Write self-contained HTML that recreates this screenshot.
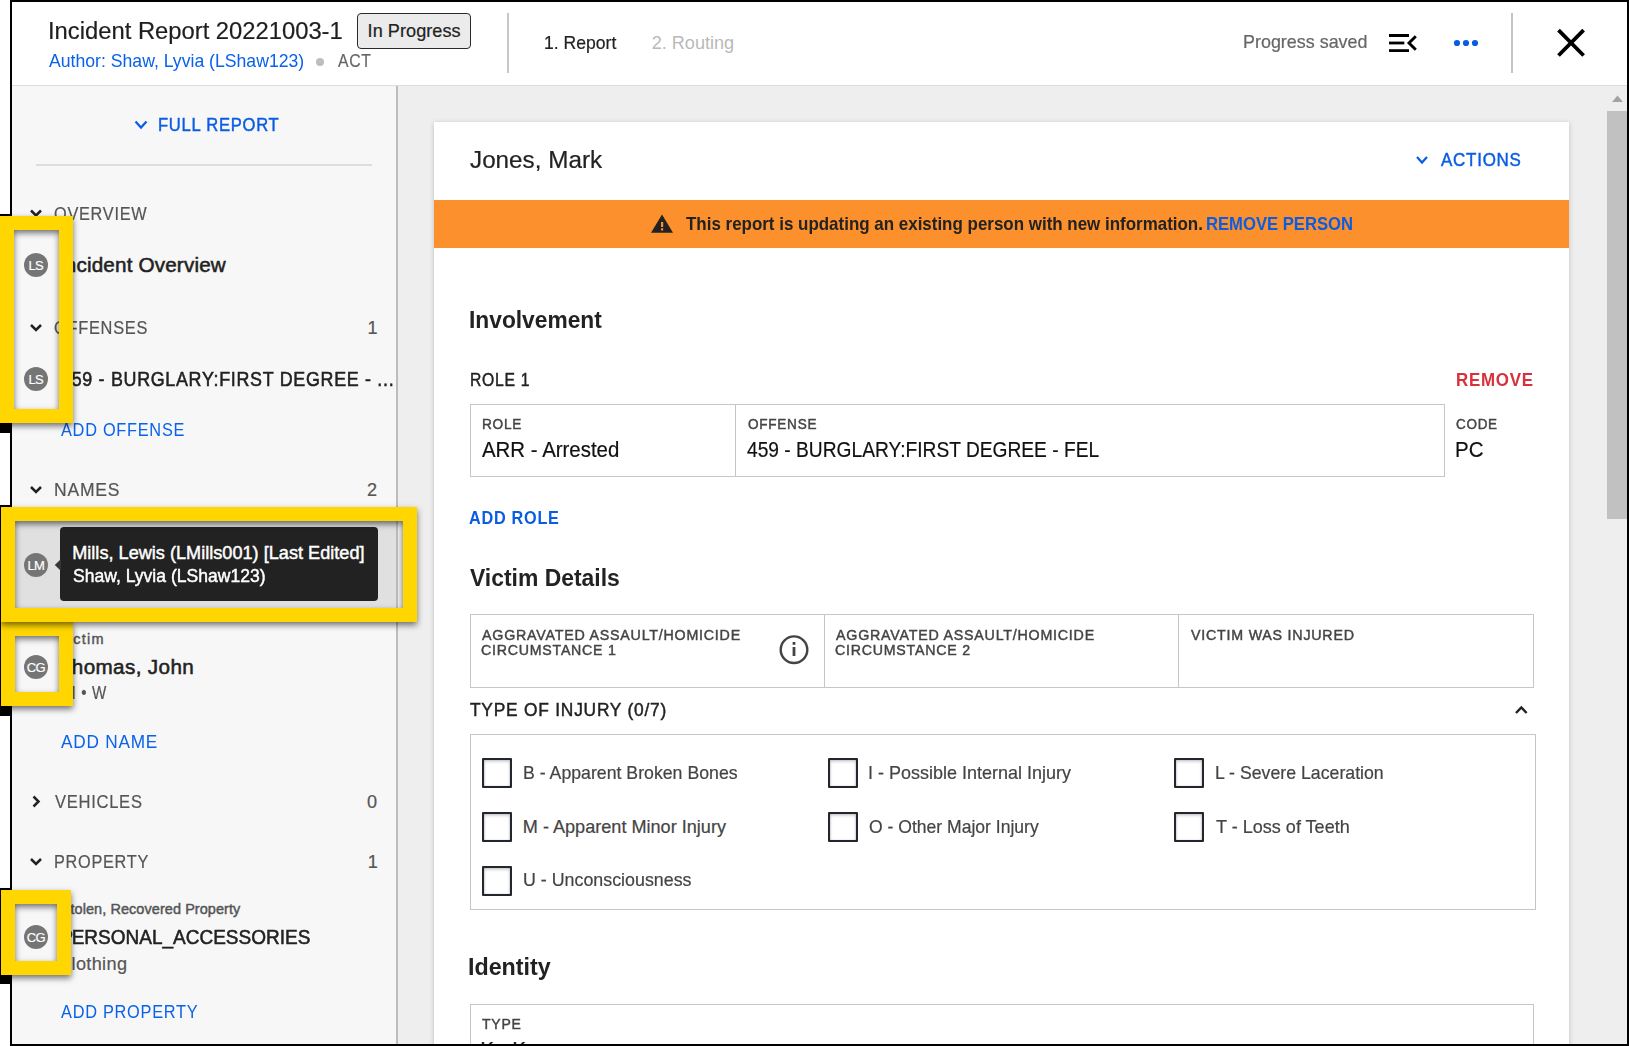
<!DOCTYPE html>
<html><head><meta charset="utf-8"><title>Incident Report</title>
<style>
*{box-sizing:border-box;margin:0;padding:0}
html,body{width:1629px;height:1046px;overflow:hidden;background:#fff;font-family:"Liberation Sans",sans-serif}
.a{position:absolute}
.t{position:absolute;white-space:nowrap;font-family:"Liberation Sans",sans-serif;z-index:3}
.box{position:absolute;border:1px solid #c6c6c6}
.cb{position:absolute;width:30px;height:30px;border:2px solid #22262d;border-radius:1px;background:#fff;box-shadow:inset 0 2px 3px rgba(0,0,0,.16),inset 1px 0 2px rgba(0,0,0,.1),inset -1px 0 2px rgba(0,0,0,.1)}
.av{position:absolute;width:24px;height:24px;border-radius:50%;background:#757575;color:#fff;font-size:13px;line-height:26px;text-align:center;letter-spacing:-0.7px;z-index:4;-webkit-text-stroke:0.2px #fff;text-indent:-0.5px}
.yb{position:absolute;border:14px solid #ffd600;z-index:10;filter:drop-shadow(0 3px 3px rgba(0,0,0,.55))}
.blk{position:absolute;background:#000;z-index:11}
</style></head><body>
<!-- frame -->
<div class="a" style="left:10px;top:0;width:1619px;height:1046px;background:#000"></div>
<!-- header -->
<div class="a" style="left:12px;top:2px;width:1615px;height:84px;background:#fff;border-bottom:1px solid #dcdcdc"></div>
<div class="a" style="left:357px;top:13px;width:114px;height:36px;border:1.5px solid #2a2a2a;border-radius:4px;background:#ebebeb"></div>
<div class="a" style="left:507px;top:13px;width:2px;height:60px;background:#c6c6c6"></div>
<div class="a" style="left:1511px;top:13px;width:2px;height:60px;background:#c6c6c6"></div>
<div class="a" style="left:316px;top:58px;width:8px;height:8px;border-radius:50%;background:#bdbdbd"></div>
<!-- sidebar -->
<div class="a" style="left:12px;top:86px;width:386px;height:958px;background:#f7f7f7;border-right:2px solid #bdbdbd"></div>
<div class="a" style="left:36px;top:164px;width:336px;height:2px;background:#dedede"></div>
<div class="a" style="left:12px;top:508px;width:384px;height:113px;background:#e0e0e0"></div>
<!-- main -->
<div class="a" style="left:398px;top:86px;width:1229px;height:958px;background:#eeeeee"></div>
<!-- scrollbar -->
<div class="a" style="left:1607px;top:111px;width:20px;height:408px;background:#c1c1c1"></div>
<svg class="a" style="left:1607px;top:90px" width="20" height="16"><polygon points="5,12 16,12 10.5,5.5" fill="#a3a3a3"/></svg>
<!-- card -->
<div class="a" style="left:434px;top:122px;width:1135px;height:940px;background:#fff;box-shadow:0 1px 5px rgba(0,0,0,.2)"></div>
<div class="a" style="left:434px;top:200px;width:1135px;height:47.5px;background:#fc902c"></div>
<!-- involvement fields -->
<div class="box" style="left:470px;top:404px;width:975px;height:73px"></div>
<div class="a" style="left:735px;top:405px;width:1px;height:71px;background:#c6c6c6"></div>
<!-- victim fields -->
<div class="box" style="left:470px;top:614px;width:1064px;height:74px"></div>
<div class="a" style="left:824px;top:615px;width:1px;height:72px;background:#c6c6c6"></div>
<div class="a" style="left:1178px;top:615px;width:1px;height:72px;background:#c6c6c6"></div>
<!-- injury box -->
<div class="box" style="left:470px;top:734px;width:1066px;height:176px"></div>
<div class="cb" style="left:482px;top:758px"></div>
<div class="cb" style="left:828px;top:758px"></div>
<div class="cb" style="left:1174px;top:758px"></div>
<div class="cb" style="left:482px;top:812px"></div>
<div class="cb" style="left:828px;top:812px"></div>
<div class="cb" style="left:1174px;top:812px"></div>
<div class="cb" style="left:482px;top:866px"></div>
<!-- identity box -->
<div class="box" style="left:470px;top:1004px;width:1064px;height:80px"></div>
<!-- tooltip -->
<div class="a" style="left:60px;top:527px;width:318px;height:74px;background:#222;border-radius:4px;z-index:5"></div>
<svg class="a" style="left:50px;top:555px;z-index:5" width="12" height="20"><polygon points="4.8,10 11,4 11,16" fill="#363636"/></svg>
<!-- avatars -->
<div class="av" style="left:24px;top:253px">LS</div>
<div class="av" style="left:24px;top:367px">LS</div>
<div class="av" style="left:24px;top:553px">LM</div>
<div class="av" style="left:24px;top:655px">CG</div>
<div class="av" style="left:24px;top:925px">CG</div>
<div class="t" style="left:47.89px;top:14.91px;font-size:24.80px;line-height:32px;font-weight:400;color:#1e1e1e;letter-spacing:0.000px;-webkit-text-stroke:0.20px #1e1e1e;transform:scaleX(0.9588);transform-origin:0 0;">Incident Report 20221003-1</div>
<div class="t" style="left:48.70px;top:48.73px;font-size:18.10px;line-height:24px;font-weight:400;color:#0a62ea;letter-spacing:0.000px;transform:scaleX(0.9746);transform-origin:0 0;">Author: Shaw, Lyvia (LShaw123)</div>
<div class="t" style="left:337.79px;top:48.73px;font-size:18.10px;line-height:24px;font-weight:400;color:#666;letter-spacing:0.800px;-webkit-text-stroke:0.20px #666;transform:scaleX(0.8706);transform-origin:0 0;">ACT</div>
<div class="t" style="left:367.55px;top:19.13px;font-size:18.10px;line-height:24px;font-weight:400;color:#222;letter-spacing:0.055px;-webkit-text-stroke:0.20px #222;">In Progress</div>
<div class="t" style="left:543.78px;top:30.53px;font-size:18.10px;line-height:24px;font-weight:400;color:#222;letter-spacing:0.000px;-webkit-text-stroke:0.20px #222;transform:scaleX(0.9712);transform-origin:0 0;">1. Report</div>
<div class="t" style="left:651.70px;top:30.53px;font-size:18.10px;line-height:24px;font-weight:400;color:#b9b9b9;letter-spacing:0.000px;">2. Routing</div>
<div class="t" style="left:1243.11px;top:30.23px;font-size:18.10px;line-height:24px;font-weight:400;color:#666;letter-spacing:0.000px;-webkit-text-stroke:0.20px #666;transform:scaleX(0.9902);transform-origin:0 0;">Progress saved</div>
<div class="t" style="left:469.66px;top:143.81px;font-size:24.80px;line-height:32px;font-weight:400;color:#222;letter-spacing:0.000px;-webkit-text-stroke:0.20px #222;transform:scaleX(0.9780);transform-origin:0 0;">Jones, Mark</div>
<div class="t" style="left:1441.09px;top:148.23px;font-size:18.10px;line-height:24px;font-weight:400;color:#0a5de2;letter-spacing:0.800px;-webkit-text-stroke:0.45px #0a5de2;transform:scaleX(0.9375);transform-origin:0 0;">ACTIONS</div>
<div class="t" style="left:685.86px;top:211.83px;font-size:18.10px;line-height:24px;font-weight:700;color:#222;letter-spacing:0.000px;transform:scaleX(0.9366);transform-origin:0 0;">This report is updating an existing person with new information.</div>
<div class="t" style="left:1206.34px;top:211.83px;font-size:18.10px;line-height:24px;font-weight:700;color:#0a5de2;letter-spacing:0.000px;transform:scaleX(0.9199);transform-origin:0 0;">REMOVE PERSON</div>
<div class="t" style="left:469.24px;top:304.31px;font-size:24.80px;line-height:32px;font-weight:700;color:#222;letter-spacing:0.000px;transform:scaleX(0.9179);transform-origin:0 0;">Involvement</div>
<div class="t" style="left:469.58px;top:367.73px;font-size:18.10px;line-height:24px;font-weight:400;color:#222;letter-spacing:0.800px;-webkit-text-stroke:0.45px #222;transform:scaleX(0.8700);transform-origin:0 0;">ROLE 1</div>
<div class="t" style="left:1455.62px;top:367.73px;font-size:18.10px;line-height:24px;font-weight:700;color:#d8303c;letter-spacing:0.800px;transform:scaleX(0.9350);transform-origin:0 0;">REMOVE</div>
<div class="t" style="left:481.99px;top:414.97px;font-size:14.80px;line-height:19px;font-weight:400;color:#444;letter-spacing:0.800px;-webkit-text-stroke:0.45px #444;transform:scaleX(0.9218);transform-origin:0 0;">ROLE</div>
<div class="t" style="left:482.25px;top:436.28px;font-size:21.70px;line-height:28px;font-weight:400;color:#111;letter-spacing:0.000px;-webkit-text-stroke:0.20px #111;transform:scaleX(0.9416);transform-origin:0 0;">ARR - Arrested</div>
<div class="t" style="left:747.56px;top:414.97px;font-size:14.80px;line-height:19px;font-weight:400;color:#444;letter-spacing:0.800px;-webkit-text-stroke:0.45px #444;transform:scaleX(0.9168);transform-origin:0 0;">OFFENSE</div>
<div class="t" style="left:747.02px;top:436.28px;font-size:21.70px;line-height:28px;font-weight:400;color:#111;letter-spacing:0.000px;-webkit-text-stroke:0.20px #111;transform:scaleX(0.8844);transform-origin:0 0;">459 - BURGLARY:FIRST DEGREE - FEL</div>
<div class="t" style="left:1456.46px;top:414.97px;font-size:14.80px;line-height:19px;font-weight:400;color:#444;letter-spacing:0.800px;-webkit-text-stroke:0.45px #444;transform:scaleX(0.9095);transform-origin:0 0;">CODE</div>
<div class="t" style="left:1454.70px;top:436.28px;font-size:21.70px;line-height:28px;font-weight:400;color:#111;letter-spacing:0.000px;-webkit-text-stroke:0.20px #111;transform:scaleX(0.9455);transform-origin:0 0;">PC</div>
<div class="t" style="left:469.44px;top:506.33px;font-size:18.10px;line-height:24px;font-weight:700;color:#0a5de2;letter-spacing:0.800px;transform:scaleX(0.8978);transform-origin:0 0;">ADD ROLE</div>
<div class="t" style="left:470.12px;top:561.51px;font-size:24.80px;line-height:32px;font-weight:700;color:#222;letter-spacing:0.000px;transform:scaleX(0.9238);transform-origin:0 0;">Victim Details</div>
<div class="t" style="left:482.05px;top:625.77px;font-size:14.80px;line-height:19px;font-weight:400;color:#444;letter-spacing:0.800px;-webkit-text-stroke:0.45px #444;transform:scaleX(0.9633);transform-origin:0 0;">AGGRAVATED ASSAULT/HOMICIDE</div>
<div class="t" style="left:481.33px;top:640.87px;font-size:14.80px;line-height:19px;font-weight:400;color:#444;letter-spacing:0.800px;-webkit-text-stroke:0.45px #444;transform:scaleX(0.9580);transform-origin:0 0;">CIRCUMSTANCE 1</div>
<div class="t" style="left:836.05px;top:625.77px;font-size:14.80px;line-height:19px;font-weight:400;color:#444;letter-spacing:0.800px;-webkit-text-stroke:0.45px #444;transform:scaleX(0.9633);transform-origin:0 0;">AGGRAVATED ASSAULT/HOMICIDE</div>
<div class="t" style="left:835.33px;top:640.87px;font-size:14.80px;line-height:19px;font-weight:400;color:#444;letter-spacing:0.800px;-webkit-text-stroke:0.45px #444;transform:scaleX(0.9587);transform-origin:0 0;">CIRCUMSTANCE 2</div>
<div class="t" style="left:1190.55px;top:625.77px;font-size:14.80px;line-height:19px;font-weight:400;color:#444;letter-spacing:0.800px;-webkit-text-stroke:0.45px #444;transform:scaleX(0.9631);transform-origin:0 0;">VICTIM WAS INJURED</div>
<div class="t" style="left:469.62px;top:698.43px;font-size:18.10px;line-height:24px;font-weight:400;color:#222;letter-spacing:0.800px;-webkit-text-stroke:0.45px #222;transform:scaleX(0.9594);transform-origin:0 0;">TYPE OF INJURY (0/7)</div>
<div class="t" style="left:522.83px;top:760.73px;font-size:18.10px;line-height:24px;font-weight:400;color:#444;letter-spacing:0.000px;-webkit-text-stroke:0.20px #444;transform:scaleX(0.9787);transform-origin:0 0;">B - Apparent Broken Bones</div>
<div class="t" style="left:868.06px;top:760.73px;font-size:18.10px;line-height:24px;font-weight:400;color:#444;letter-spacing:0.000px;-webkit-text-stroke:0.20px #444;transform:scaleX(0.9940);transform-origin:0 0;">I - Possible Internal Injury</div>
<div class="t" style="left:1215.03px;top:760.73px;font-size:18.10px;line-height:24px;font-weight:400;color:#444;letter-spacing:0.000px;-webkit-text-stroke:0.20px #444;transform:scaleX(0.9790);transform-origin:0 0;">L - Severe Laceration</div>
<div class="t" style="left:522.80px;top:814.53px;font-size:18.10px;line-height:24px;font-weight:400;color:#444;letter-spacing:0.002px;-webkit-text-stroke:0.20px #444;">M - Apparent Minor Injury</div>
<div class="t" style="left:869.07px;top:814.53px;font-size:18.10px;line-height:24px;font-weight:400;color:#444;letter-spacing:0.000px;-webkit-text-stroke:0.20px #444;transform:scaleX(0.9700);transform-origin:0 0;">O - Other Major Injury</div>
<div class="t" style="left:1216.00px;top:814.53px;font-size:18.10px;line-height:24px;font-weight:400;color:#444;letter-spacing:0.000px;-webkit-text-stroke:0.20px #444;transform:scaleX(0.9973);transform-origin:0 0;">T - Loss of Teeth</div>
<div class="t" style="left:523.07px;top:868.33px;font-size:18.10px;line-height:24px;font-weight:400;color:#444;letter-spacing:0.000px;-webkit-text-stroke:0.20px #444;transform:scaleX(0.9854);transform-origin:0 0;">U - Unconsciousness</div>
<div class="t" style="left:468.41px;top:951.21px;font-size:24.80px;line-height:32px;font-weight:700;color:#222;letter-spacing:0.000px;transform:scaleX(0.9384);transform-origin:0 0;">Identity</div>
<div class="t" style="left:481.81px;top:1015.47px;font-size:14.80px;line-height:19px;font-weight:400;color:#444;letter-spacing:0.800px;-webkit-text-stroke:0.45px #444;transform:scaleX(0.9465);transform-origin:0 0;">TYPE</div>
<div class="t" style="left:480.17px;top:1035.34px;font-size:20.67px;line-height:27px;font-weight:400;color:#111;letter-spacing:0.000px;-webkit-text-stroke:0.20px #111;">K - K</div>
<div class="t" style="left:158.22px;top:112.73px;font-size:18.10px;line-height:24px;font-weight:400;color:#0a5de2;letter-spacing:0.800px;-webkit-text-stroke:0.45px #0a5de2;transform:scaleX(0.9168);transform-origin:0 0;">FULL REPORT</div>
<div class="t" style="left:53.81px;top:201.73px;font-size:18.10px;line-height:24px;font-weight:400;color:#555;letter-spacing:0.800px;-webkit-text-stroke:0.20px #555;transform:scaleX(0.9016);transform-origin:0 0;">OVERVIEW</div>
<div class="t" style="left:58.92px;top:251.34px;font-size:20.67px;line-height:27px;font-weight:400;color:#222;letter-spacing:0.166px;-webkit-text-stroke:0.55px #222;">Incident Overview</div>
<div class="t" style="left:53.81px;top:315.63px;font-size:18.10px;line-height:24px;font-weight:400;color:#555;letter-spacing:0.800px;-webkit-text-stroke:0.20px #555;transform:scaleX(0.9060);transform-origin:0 0;">OFFENSES</div>
<div class="t" style="left:367.55px;top:315.63px;font-size:18.10px;line-height:24px;font-weight:400;color:#555;letter-spacing:0.000px;-webkit-text-stroke:0.20px #555;">1</div>
<div class="t" style="left:60.50px;top:365.34px;font-size:20.67px;line-height:27px;font-weight:400;color:#222;letter-spacing:0.800px;-webkit-text-stroke:0.55px #222;transform:scaleX(0.8660);transform-origin:0 0;">459 - BURGLARY:FIRST DEGREE - ...</div>
<div class="t" style="left:61.39px;top:417.53px;font-size:18.10px;line-height:24px;font-weight:400;color:#0a62ea;letter-spacing:0.800px;transform:scaleX(0.9028);transform-origin:0 0;">ADD OFFENSE</div>
<div class="t" style="left:53.54px;top:478.03px;font-size:18.10px;line-height:24px;font-weight:400;color:#555;letter-spacing:0.800px;-webkit-text-stroke:0.20px #555;transform:scaleX(0.9684);transform-origin:0 0;">NAMES</div>
<div class="t" style="left:367.10px;top:478.03px;font-size:18.10px;line-height:24px;font-weight:400;color:#555;letter-spacing:0.000px;-webkit-text-stroke:0.20px #555;">2</div>
<div class="t" style="left:58.24px;top:630.29px;font-size:14.47px;line-height:19px;font-weight:400;color:#555;letter-spacing:1.250px;-webkit-text-stroke:0.45px #555;">Victim</div>
<div class="t" style="left:58.88px;top:653.14px;font-size:20.67px;line-height:27px;font-weight:400;color:#222;letter-spacing:0.360px;-webkit-text-stroke:0.55px #222;">Thomas, John</div>
<div class="t" style="left:62.85px;top:681.33px;font-size:18.10px;line-height:24px;font-weight:400;color:#555;letter-spacing:0.800px;-webkit-text-stroke:0.20px #555;transform:scaleX(0.8382);transform-origin:0 0;">M • W</div>
<div class="t" style="left:60.80px;top:730.43px;font-size:18.10px;line-height:24px;font-weight:400;color:#0a62ea;letter-spacing:0.800px;transform:scaleX(0.9524);transform-origin:0 0;">ADD NAME</div>
<div class="t" style="left:54.89px;top:789.53px;font-size:18.10px;line-height:24px;font-weight:400;color:#555;letter-spacing:0.800px;-webkit-text-stroke:0.20px #555;transform:scaleX(0.9139);transform-origin:0 0;">VEHICLES</div>
<div class="t" style="left:366.95px;top:789.53px;font-size:18.10px;line-height:24px;font-weight:400;color:#555;letter-spacing:0.000px;-webkit-text-stroke:0.20px #555;">0</div>
<div class="t" style="left:53.64px;top:849.53px;font-size:18.10px;line-height:24px;font-weight:400;color:#555;letter-spacing:0.800px;-webkit-text-stroke:0.20px #555;transform:scaleX(0.8999);transform-origin:0 0;">PROPERTY</div>
<div class="t" style="left:367.85px;top:849.53px;font-size:18.10px;line-height:24px;font-weight:400;color:#555;letter-spacing:0.000px;-webkit-text-stroke:0.20px #555;">1</div>
<div class="t" style="left:60.77px;top:900.19px;font-size:14.47px;line-height:19px;font-weight:400;color:#555;letter-spacing:0.073px;-webkit-text-stroke:0.45px #555;">Stolen, Recovered Property</div>
<div class="t" style="left:59.19px;top:923.04px;font-size:20.67px;line-height:27px;font-weight:400;color:#222;letter-spacing:0.000px;-webkit-text-stroke:0.55px #222;transform:scaleX(0.9198);transform-origin:0 0;">PERSONAL_ACCESSORIES</div>
<div class="t" style="left:59.17px;top:923.04px;font-size:20.67px;line-height:27px;font-weight:400;color:#222;letter-spacing:0.000px;-webkit-text-stroke:0.55px #222;">P</div>
<div class="t" style="left:58.09px;top:951.83px;font-size:18.10px;line-height:24px;font-weight:400;color:#555;letter-spacing:0.358px;-webkit-text-stroke:0.20px #555;">Clothing</div>
<div class="t" style="left:60.79px;top:999.83px;font-size:18.10px;line-height:24px;font-weight:400;color:#0a62ea;letter-spacing:0.800px;transform:scaleX(0.9037);transform-origin:0 0;">ADD PROPERTY</div>
<div class="t" style="left:72.20px;top:540.93px;font-size:18.10px;line-height:24px;font-weight:400;color:#fff;letter-spacing:0.019px;-webkit-text-stroke:0.45px #fff;z-index:6;">Mills, Lewis (LMills001) [Last Edited]</div>
<div class="t" style="left:72.97px;top:564.23px;font-size:18.10px;line-height:24px;font-weight:400;color:#fff;letter-spacing:0.000px;-webkit-text-stroke:0.45px #fff;transform:scaleX(0.9701);transform-origin:0 0;z-index:6;">Shaw, Lyvia (LShaw123)</div><!-- icons -->
<svg class="a" style="left:0;top:0;z-index:4" width="1629" height="1046">
 <g fill="none" stroke-linecap="butt" stroke-linejoin="miter">
  <!-- full report chevron -->
  <polyline points="135.5,121.5 141,127.5 146.5,121.5" stroke="#0a5de2" stroke-width="2.2"/>
  <!-- sidebar chevrons -->
  <polyline points="31,210.5 36,215.5 41,210.5" stroke="#222" stroke-width="2.5"/>
  <polyline points="31,325 36,330 41,325" stroke="#222" stroke-width="2.5"/>
  <polyline points="31,487 36,492 41,487" stroke="#222" stroke-width="2.5"/>
  <polyline points="33.5,796.5 38.5,801.5 33.5,806.5" stroke="#222" stroke-width="2.5"/>
  <polyline points="31,859 36,864 41,859" stroke="#222" stroke-width="2.5"/>
  <!-- actions chevron -->
  <polyline points="1417,157 1422,162.5 1427,157" stroke="#0a5de2" stroke-width="2.2"/>
  <!-- caret up -->
  <polyline points="1516,713 1521.3,707.5 1526.6,713" stroke="#222" stroke-width="2.5"/>
  <!-- menu icon -->
  <rect x="1389" y="34" width="20" height="3" fill="#000" stroke="none"/>
  <rect x="1389" y="41.6" width="15.3" height="2.8" fill="#000" stroke="none"/>
  <rect x="1389" y="49.2" width="20" height="2.8" fill="#000" stroke="none"/>
  <polyline points="1415.8,36.3 1409,43 1415.8,49.7" stroke="#000" stroke-width="2.9"/>
  <!-- close -->
  <path d="M1558.5,30.1 L1583.6,55.5 M1583.6,30.1 L1558.5,55.5" stroke="#000" stroke-width="3.8"/>
  <!-- info icon -->
  <circle cx="794" cy="649.7" r="13.3" stroke="#444" stroke-width="2.4"/>
 </g>
 <circle cx="1457" cy="43" r="3.1" fill="#0a5de2"/>
 <circle cx="1466" cy="43" r="3.1" fill="#0a5de2"/>
 <circle cx="1475" cy="43" r="3.1" fill="#0a5de2"/>
 <rect x="792.6" y="647" width="2.8" height="9" fill="#444"/>
 <rect x="792.6" y="642" width="2.8" height="2.8" fill="#444"/>
 <!-- warning -->
 <polygon points="651,232.8 673,232.8 662,214.4" fill="#222"/>
 <rect x="661" y="222" width="2.2" height="5" fill="#fc902c"/>
 <rect x="661" y="228.3" width="2.2" height="2.2" fill="#fc902c"/>
</svg>
<!-- frame overlay -->
<div class="a" style="left:10px;top:0;width:1619px;height:2px;background:#000;z-index:9"></div>
<div class="a" style="left:10px;top:1044px;width:1619px;height:2px;background:#000;z-index:9"></div>
<div class="a" style="left:10px;top:0;width:2px;height:1046px;background:#000;z-index:9"></div>
<div class="a" style="left:1627px;top:0;width:2px;height:1046px;background:#000;z-index:9"></div>
<!-- yellow annotation boxes -->
<div class="yb" style="left:0px;top:216px;width:73px;height:207px"></div>
<div class="yb" style="left:1px;top:507px;width:416px;height:115px;z-index:12"></div>
<div class="yb" style="left:1px;top:621.7px;width:72px;height:84px"></div>
<div class="yb" style="left:1px;top:890px;width:70px;height:85px"></div>
<div class="blk" style="left:0;top:214px;width:12px;height:2px"></div>
<div class="blk" style="left:0;top:423px;width:12px;height:10px"></div>
<div class="blk" style="left:0;top:505px;width:12px;height:2px"></div>
<div class="blk" style="left:0;top:507px;width:1px;height:115px"></div>
<div class="blk" style="left:0;top:621.7px;width:1px;height:84px"></div>
<div class="blk" style="left:0;top:705.6px;width:12px;height:10px"></div>
<div class="blk" style="left:0;top:887.5px;width:12px;height:2.5px"></div>
<div class="blk" style="left:0;top:890px;width:1px;height:85px"></div>
<div class="blk" style="left:0;top:975px;width:11.5px;height:9px"></div>
</body></html>
